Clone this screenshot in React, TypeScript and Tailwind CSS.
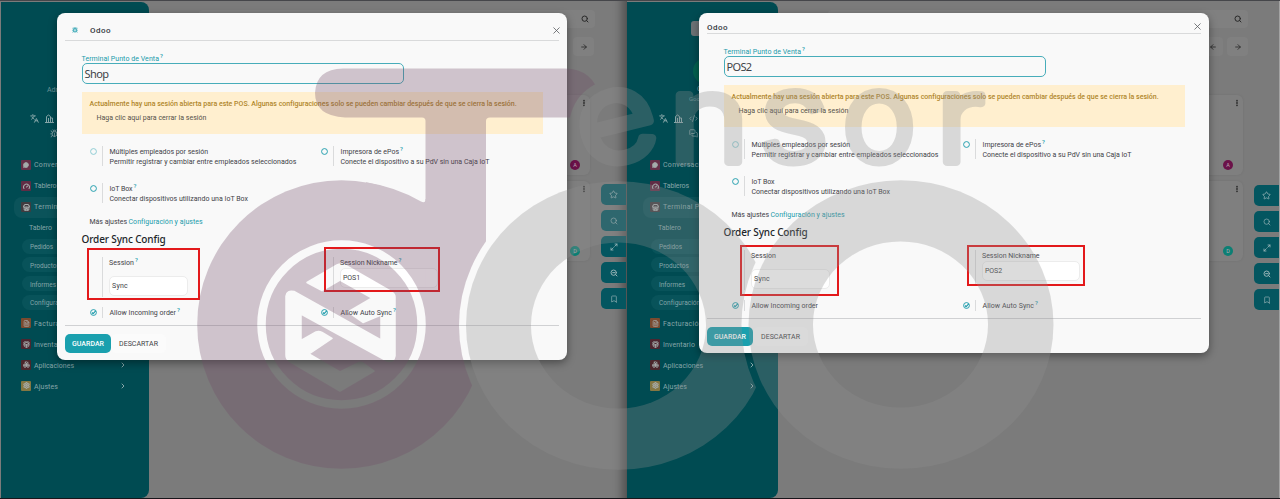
import { useLayoutEffect, useRef, useState, type ReactNode } from "react";
import {
  Search, ArrowLeft, ArrowRight, Star, ZoomOut, Bookmark, ChevronRight, X, Bug, Languages,
  MessageCircle, Gauge, Store, FileText, PackageOpen, Boxes, Settings, EllipsisVertical,
  CodeXml, MessagesSquare, Maximize2,
} from "lucide-react";

/* Single-line label whose tracking is adjusted to span a given width. */
function Label({ w, level, className = "", children }: { w: number; level?: boolean; className?: string; children: string }) {
  const ref = useRef<HTMLSpanElement>(null);
  const [space, setSpace] = useState(0);
  useLayoutEffect(() => {
    const natural = ref.current!.getBoundingClientRect().width;
    setSpace((w - natural) / children.length);
  }, [w, children]);
  return (
    <span
      ref={ref}
      className={`inline-block shrink-0 whitespace-nowrap ${level ? "" : "translate-y-[0.5px]"} ${className}`}
      style={{ letterSpacing: `${space}px` }}
    >
      {children}
    </span>
  );
}

function Help() {
  return <span className="-mt-[1px] ml-[1px] text-[6px] leading-[8px] font-medium text-[#1a9bab]">?</span>;
}

function Towers() {
  return (
    <svg viewBox="0 0 18 18" className="size-[9px]" fill="none" stroke="currentColor" strokeWidth="2">
      <path d="M0 17h18M3 17V5l4-3 4 3v12M7 17V8M11 8h4v9" />
    </svg>
  );
}

function Tile({ color, children }: { color: string; children: ReactNode }) {
  return <span className={`flex size-[10px] shrink-0 items-center justify-center rounded-[1px] text-[#a5abab] ${color}`}>{children}</span>;
}

const apps = [
  { name: "Conversaciones", w: 54, color: "bg-[#652f48]", icon: <MessageCircle size={6} strokeWidth={3} fill="currentColor" /> },
  { name: "Tableros", w: 26, color: "bg-[#602c45]", icon: <Gauge size={7} strokeWidth={3.5} /> },
  { name: "Terminal Punto de Venta", w: 84, color: "bg-[#403c40]", icon: <Store size={7} strokeWidth={3.5} /> },
];

const moreApps = [
  { name: "Facturación", w: 40, color: "bg-[#7a4a2f]", icon: <FileText size={7} strokeWidth={2.5} />, open: false },
  { name: "Inventario", w: 32, color: "bg-[#4c2630]", icon: <PackageOpen size={7} strokeWidth={3} />, open: false },
  { name: "Aplicaciones", w: 40, color: "bg-[#4b262c]", icon: <Boxes size={7} strokeWidth={2.5} />, open: true },
  { name: "Ajustes", w: 24, color: "bg-[#857742]", icon: <Settings size={7} strokeWidth={3.5} />, open: true },
];

const subItems = [
  { name: "Pedidos", w: 23 },
  { name: "Productos", w: 30 },
  { name: "Informes", w: 26 },
  { name: "Configuración", w: 41 },
];

function Sidebar({ second }: { second?: boolean }) {
  return (
    <aside
      className={`relative mt-[1px] flex h-[496px] shrink-0 flex-col overflow-hidden rounded-r-[8px] bg-[#004b52] text-[7px] leading-[10px] text-[#86a6a9] ${
        second ? "w-[151px] pl-[16px]" : "w-[148px] pl-[13px]"
      }`}
    >
      <div className="h-[109px]">
        {second ? (
          <div className="flex flex-col items-start pl-[38px]">
            <div className="mt-[19px] ml-[10px] h-[15px] w-[30px] rounded-[3px] bg-[#6d7376]" />
            <div className="mt-[22px] ml-[12px] size-[26px] rounded-full bg-[#00614f]" />
            <span className="ml-[16px] h-[10px] leading-[10px]">Odoo</span>
            <span className="ml-[8px] text-[6px] text-[#5f8f93]">Google</span>
          </div>
        ) : (
          <div className="pt-[83px] pl-[33px] text-[#6d9396]">Administrator</div>
        )}
      </div>
      <div className="flex h-[15px] items-center gap-[6px] pl-[16px]">
        <Languages size={9} strokeWidth={2.5} />
        <Towers />
        {second && <CodeXml size={9} strokeWidth={2} />}
      </div>
      <div className={`flex h-[15px] items-center ${second ? "pl-[46px]" : "pl-[36px]"}`}>
        {second ? <MessagesSquare size={9} strokeWidth={2} /> : <Bug size={9} strokeWidth={2} />}
      </div>
      <nav className="mt-[13.5px] flex flex-col">
        {apps.map((a, i) => (
          <div key={a.name} className={`flex h-[21px] items-center gap-[3px] rounded-l-[8px] pl-[7px] ${i === 2 ? "bg-[#0b535a]" : ""}`}>
            <Tile color={a.color}>{a.icon}</Tile>
            <Label w={a.w} level>{a.name}</Label>
          </div>
        ))}
        <div className="flex h-[20px] items-center pl-[15px]">
          <Label w={23} level>Tablero</Label>
        </div>
        <div className="mb-[3px] flex flex-col gap-[3.75px] pt-[1px] pl-[8px] text-[6.5px]">
          {subItems.map((s) => (
            <div key={s.name} className="flex h-[15px] items-center rounded-l-[8px] bg-[#08535a] pl-[8px]">
              <Label w={s.w}>{s.name}</Label>
            </div>
          ))}
        </div>
        {moreApps.map((a) => (
          <div key={a.name} className="flex h-[20.9px] items-center gap-[3px] pl-[7px]">
            <Tile color={a.color}>{a.icon}</Tile>
            <Label w={a.w}>{a.name}</Label>
            {a.open && <ChevronRight size={8} strokeWidth={3} className="mr-[22.5px] ml-auto" />}
          </div>
        ))}
      </nav>
    </aside>
  );
}

function KanbanCard({ letter, color, height }: { letter: string; color: string; height: string }) {
  return (
    <div className={`mr-[36px] flex flex-col items-end justify-between rounded-r-[6px] bg-[#7f7f7f] shadow-[0_0_3px_rgba(0,0,0,0.08)] ${height}`}>
      <EllipsisVertical size={8} strokeWidth={3.5} className="mt-[4px] mr-[2px] text-[#262626]" />
      <span className={`mr-[10px] mb-[5px] flex size-[10px] items-center justify-center rounded-full text-[5.5px] text-[#b9a6b2] ${color}`}>{letter}</span>
    </div>
  );
}

function Board({ second }: { second?: boolean }) {
  const icons = [
    <Star key="s" size={9} />, <Search key="q" size={8} />, <Maximize2 key="m" size={8} strokeWidth={2.5} />,
    <ZoomOut key="z" size={8} strokeWidth={3} />, <Bookmark key="b" size={8} />,
  ];
  return (
    <main className="relative flex grow flex-col pt-[9px] text-[#292929]">
      <div className="mr-[31px] ml-[50px] flex h-[18px] items-center justify-end rounded-[4px] bg-[#808080] pr-[6px]">
        <Search size={8} strokeWidth={3} />
      </div>
      <div className="mt-[9px] mr-[31px] flex justify-end gap-[4px]">
        {second && (
          <span className="flex h-[19px] w-[21px] items-center justify-center rounded-[4px] bg-[#7f7f7f]"><ArrowLeft size={8} strokeWidth={2.5} /></span>
        )}
        <span className={`flex h-[19px] w-[21px] items-center justify-center rounded-[4px] bg-[#808080] ${second ? "" : "mr-[1px]"}`}><ArrowRight size={8} strokeWidth={2.5} /></span>
      </div>
      <div className="mt-[39px] flex flex-col gap-[6px]">
        <KanbanCard letter="A" color="bg-[#6b1249]" height="h-[80px]" />
        <KanbanCard letter="D" color="bg-[#0c7f74]" height="h-[80px]" />
      </div>
      <div className={`absolute right-0 flex flex-col gap-[5px] ${second ? "top-[184px]" : "top-[183px]"}`}>
        {icons.map((icon, i) => (
          <span key={i} className="flex h-[21px] w-[25px] items-center justify-center rounded-l-[5px] bg-[#045660] text-[#98b4b7]">{icon}</span>
        ))}
      </div>
    </main>
  );
}

function Check({ on, faint }: { on?: boolean; faint?: boolean }) {
  return (
    <svg viewBox="0 0 12 12" className={`size-[7px] shrink-0 ${faint ? "opacity-50" : ""}`} fill="none" stroke="#1a9bab" strokeWidth="1.6">
      <circle cx="6" cy="6" r="5" />
      {on && <path d="M3.3 6l2 2 4.5-4.8" strokeWidth="1.9" />}
    </svg>
  );
}

function Option({ title, tw, text, w = 0, help, on, faint }: { title: string; tw: number; text?: string; w?: number; help?: boolean; on?: boolean; faint?: boolean }) {
  return (
    <div className={`flex ${text ? "h-[20px]" : "h-[11px]"}`}>
      <span className={`flex w-[12px] shrink-0 ${text ? "pt-[1.5px]" : "pt-[2px]"}`}><Check on={on} faint={faint} /></span>
      <span className="mr-[7px] w-px shrink-0 bg-[#dadbdc]" />
      <div className="flex flex-col leading-[10px]">
        <span className="flex"><Label w={tw}>{title}</Label>{help && <Help />}</span>
        {text && <Label w={w}>{text}</Label>}
      </div>
    </div>
  );
}

function Dialog({ second, name }: { second?: boolean; name: string }) {
  return (
    <section
      className={`absolute z-10 flex w-[510px] flex-col rounded-[8px] bg-[#f9f9f9] px-[8px] text-[7px] leading-[10px] text-[#3e4247] shadow-[0_3px_9px_rgba(0,0,0,0.4)] ${
        second ? "top-[13px] left-[699px] h-[340px]" : "top-[13px] left-[57px] h-[347px]"
      }`}
    >
      <header className={`flex shrink-0 items-center border-b border-[#d9dadb] ${second ? "h-[21px] pt-[7px]" : "h-[28px] pt-[7px] pl-[7px]"}`}>
        {!second && <Bug size={6} strokeWidth={2.5} className="mr-[12px] text-[#1a9bab]" />}
        <Label w={21} className="text-[8px] font-medium text-[#34383d]">Odoo</Label>
        <X size={11} strokeWidth={1.7} className={`ml-auto text-[#55585c] ${second ? "-mr-[2px]" : "-mr-[3px]"}`} />
      </header>

      <div className={`flex flex-col ${second ? "pr-[15.5px] pl-[16.5px]" : "px-[16px] pl-[16.5px]"}`}>
        <div className="mt-[12px] flex text-[#1a9bab]">
          <Label w={77.5}>Terminal Punto de Venta</Label><Help />
        </div>
        <div className="flex h-[21px] w-[322.5px] items-center rounded-[5px] border border-[#47adba] pl-[2px] font-['Noto_Sans',sans-serif] text-[11px]">
          <Label w={second ? 25 : 24} level>{name}</Label>
        </div>
        <div className="mt-[8px] flex h-[42px] w-[461.5px] flex-col bg-[#ffefcf] pt-[6px] pl-[8px]">
          <Label w={427} className="w-fit font-medium text-[#b0862a]">
            Actualmente hay una sesión abierta para este POS. Algunas configuraciones solo se pueden cambiar después de que se cierra la sesión.
          </Label>
          <Label w={110} level className="mt-[5px] ml-[7px] w-fit text-[#54514a]">Haga clic aquí para cerrar la sesión</Label>
        </div>

        <div className="mt-[12px] grid grid-cols-[231px_1fr] gap-y-[17px] pl-[8px]">
          <Option title="Múltiples empleados por sesión" tw={98.5} text="Permitir registrar y cambiar entre empleados seleccionados" w={187} faint />
          <Option title="Impresora de ePos" tw={58.5} text="Conecte el dispositivo a su PdV sin una Caja IoT" w={149} help />
          <Option title="IoT Box" tw={23} text="Conectar dispositivos utilizando una IoT Box" w={138.5} help={!second} />
        </div>
        <div className="mt-[13px] flex gap-[1.5px] pl-[8px]">
          <Label w={37.5}>Más ajustes</Label>
          <Label w={74} className="text-[#1a9bab]">Configuración y ajustes</Label>
        </div>
        <div className="mt-[6px] flex h-[14px] items-center font-['Noto_Sans',sans-serif] text-[10px] font-medium text-[#212529]">
          <Label w={84} level>Order Sync Config</Label>
        </div>

        <div className="mt-[11px] grid h-[40px] grid-cols-[231px_1fr] pl-[20px]">
          <div className="flex gap-[6.5px]">
            <span className="w-px bg-[#dadbdc]" />
            <div className="flex flex-col">
              <span className="flex"><Label w={25}>Session</Label>{!second && <Help />}</span>
              <div className="mt-[9px] flex h-[20px] w-[79px] items-center rounded-[5px] border border-[#ececec] bg-white pl-[2px]">
                <Label w={16} level>Sync</Label>
              </div>
            </div>
          </div>
          <div className="flex gap-[6.5px]">
            <span className="h-[35px] w-px bg-[#dadbdc]" />
            <div className="flex flex-col">
              <span className="flex"><Label w={57.5}>Session Nickname</Label>{!second && <Help />}</span>
              <div className="mt-[0.5px] flex h-[20px] w-[98px] items-center rounded-[5px] border border-[#ececec] bg-white pl-[2px]">
                <Label w={17} level>{second ? "POS2" : "POS1"}</Label>
              </div>
            </div>
          </div>
        </div>
        <div className="mt-[10px] grid grid-cols-[231px_1fr] pl-[8px]">
          <Option title="Allow Incoming order" tw={66.5} on help={!second} />
          <Option title="Allow Auto Sync" tw={51.5} on help />
        </div>
      </div>

      <footer className="mt-[7px] flex items-center border-t border-[#d0d1d3] pt-[8px]">
        <button className="flex h-[19px] w-[46px] items-center justify-center rounded-[5px] bg-[#1aa0ae] font-medium text-white">
          <Label w={32} level>GUARDAR</Label>
        </button>
        <button className="flex h-[19px] w-[55px] items-center justify-center rounded-[5px] bg-[#fbfbfb]">
          <Label w={39} level>DESCARTAR</Label>
        </button>
      </footer>
    </section>
  );
}

function Watermark() {
  return (
    <svg className="pointer-events-none absolute inset-0 z-20" width="1280" height="499" viewBox="0 0 1280 499">
      <defs>
        <mask id="gap-d" maskUnits="userSpaceOnUse" x="0" y="0" width="1280" height="499">
          <rect width="1280" height="499" fill="white" />
          <ellipse cx="618.5" cy="325.5" rx="159.5" ry="151" fill="black" />
          <circle cx="617" cy="127" r="48" fill="black" />
          <circle cx="341.5" cy="324.5" r="80" fill="none" stroke="black" strokeWidth="8.5" />
          <path
            fill="black" stroke="black" strokeWidth="1.5" strokeLinejoin="round"
            d="M307 282.500 L337 265 Q341 263 345 265 L392 292 Q395 294 395 297 V356 Q394 363 387 361 L301 314 V340.500 L316 332 Q319 331 322 332.500 L332 338.500 L309 354 L340 372 L359 362.500 Q361 362 363 363 L374 371 L340 391 L289 361 Q286 359 286 355 V296 Q287 290 294 291.500 L381 340 V315 L363 322.500 L348 312 L372 298 L340 280 L322 290.500 Z"
          />
        </mask>
        <mask id="gap-o" maskUnits="userSpaceOnUse" x="0" y="0" width="1280" height="499">
          <rect width="1280" height="499" fill="white" />
          <ellipse cx="618.500" cy="325.500" rx="87.500" ry="83" fill="black" />
          <ellipse cx="901" cy="324.500" rx="159.500" ry="151" fill="black" />
        </mask>
        <mask id="gap-o2" maskUnits="userSpaceOnUse" x="0" y="0" width="1280" height="499">
          <rect width="1280" height="499" fill="white" />
          <ellipse cx="900.500" cy="324.500" rx="87.500" ry="83" fill="black" />
        </mask>
      </defs>
      <g opacity="0.3" fill="#714b67">
        <g mask="url(#gap-d)">
          <circle cx="341.500" cy="324.500" r="144.300" />
          <path d="M343 68.500 H565 Q594 69 600 98 V117.500 H490 Q486 117.500 486 121 V324.500 H425.500 V121 Q425.500 117.500 422 117.500 H345 Q315 116 315 93 Q316 69 343 68.500 Z" />
          <path d="M366 182.300 Q396 187 421 201.500 Q425.500 204 425.500 199 H430 V240 H366 Z" />
        </g>
      </g>
      <g opacity="0.3" fill="#8f8f8f">
        <ellipse mask="url(#gap-o)" cx="618.500" cy="325.500" rx="152.500" ry="144.300" />
        <ellipse mask="url(#gap-o2)" cx="901" cy="324.500" rx="152.500" ry="144.300" />
      </g>
      <g
        opacity="0.3" fill="#8f8f8f" stroke="#8f8f8f" strokeWidth="8" strokeLinejoin="round" strokeLinecap="round"
        fontFamily="Inter, sans-serif" fontWeight="300" fontSize="122" textAnchor="middle"
      >
        <text transform="translate(617 127) rotate(-14) scale(1.14 1.03)" y="33">e</text>
        <text transform="translate(709 127) scale(1.12 1)" y="35">n</text>
        <text transform="translate(794 127) scale(1.1 1.02)" y="33">s</text>
        <text transform="translate(879 127) scale(1.02 1.02)" y="33">o</text>
        <text transform="translate(960 127) scale(1.1 1)" y="35">r</text>
      </g>
    </svg>
  );
}

export default function App() {
  return (
    <div className="relative flex h-[499px] w-[1280px] flex-col overflow-hidden bg-[#7b7b7b] font-[Roboto,sans-serif]">
      <div className="flex h-[498px] border-t border-[#45464a]">
        <div className="flex w-[627px] border-r border-[#555555] pl-px shadow-[inset_-14px_0_10px_-10px_rgba(0,0,0,0.35)]">
          <Sidebar />
          <Board />
        </div>
        <div className="flex w-[652px]">
          <Sidebar second />
          <Board second />
        </div>
        <div className="w-px bg-[#a3a3a3]" />
      </div>
      <div className="h-px bg-[#17151a]" />
      <Dialog name="Shop" />
      <Dialog second name="POS2" />
      <div className="absolute top-[248px] left-[87px] z-10 h-[52px] w-[113px] border-2 border-[#e3191b]" />
      <div className="absolute top-[247px] left-[324px] z-10 h-[45px] w-[116px] border-2 border-[#e3191b]" />
      <div className="absolute top-[245px] left-[740px] z-10 h-[51px] w-[99px] border-2 border-[#e3191b]" />
      <div className="absolute top-[245px] left-[967px] z-10 h-[41px] w-[118px] border-2 border-[#e3191b]" />
      <Watermark />
    </div>
  );
}
